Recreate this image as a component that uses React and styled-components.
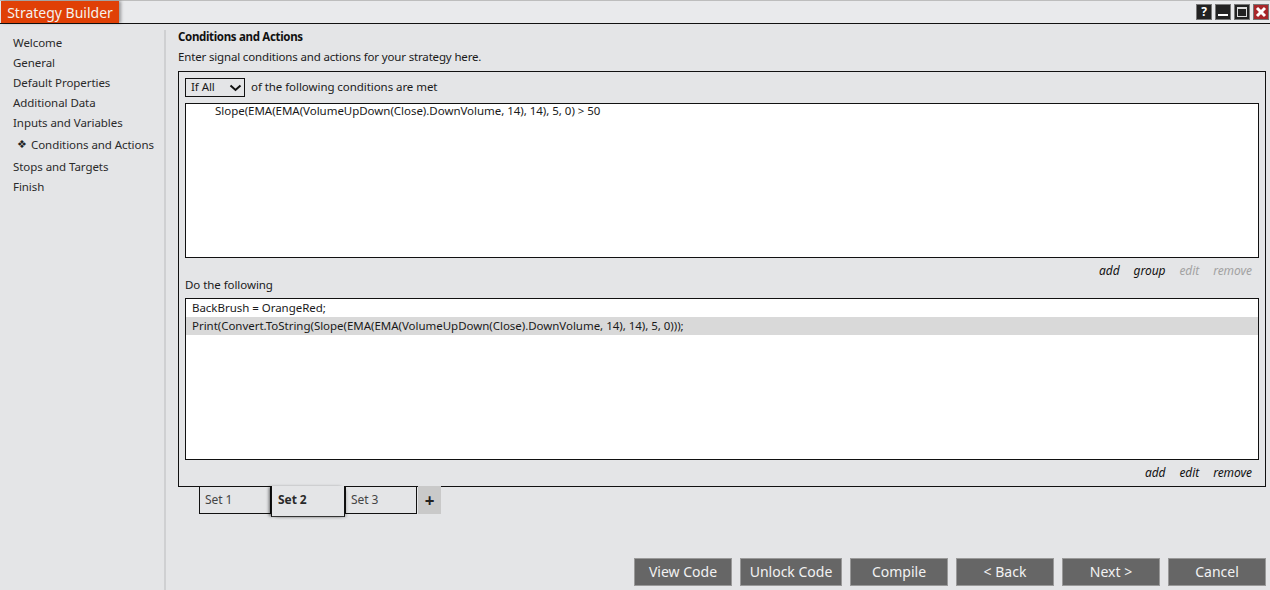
import { createGlobalStyle } from "styled-components";
import styled from "styled-components";

const navItems = [
  "Welcome",
  "General",
  "Default Properties",
  "Additional Data",
  "Inputs and Variables",
  "Conditions and Actions",
  "Stops and Targets",
  "Finish",
];

const footerButtons = ["View Code", "Unlock Code", "Compile", "< Back", "Next >", "Cancel"];

export default function App() {
  return (
    <Page>
      <GlobalStyle />
      <TitleBar>
        <TitleTab>Strategy Builder</TitleTab>
        <WindowButtons>
          <WindowButton>
            <HelpMark>?</HelpMark>
          </WindowButton>
          <WindowButton>
            <svg width="12" height="12" viewBox="0 0 12 12">
              <rect x="1" y="8" width="10" height="2" fill="#fff" />
            </svg>
          </WindowButton>
          <WindowButton>
            <svg width="12" height="12" viewBox="0 0 12 12">
              <rect x="1.5" y="1.5" width="9" height="9" fill="none" stroke="#ddd" />
              <rect x="1" y="1" width="10" height="2" fill="#ddd" />
            </svg>
          </WindowButton>
          <WindowButton $close>
            <svg width="12" height="12" viewBox="0 0 12 12">
              <path d="M2 2 L10 10 M10 2 L2 10" stroke="#fff" strokeWidth="3" />
            </svg>
          </WindowButton>
        </WindowButtons>
      </TitleBar>
      <Body>
        <Sidebar>
          {navItems.map((item) => (
            <NavItem key={item} $active={item === "Conditions and Actions"}>
              {item === "Conditions and Actions" && <NavMark>❖</NavMark>}
              {item}
            </NavItem>
          ))}
        </Sidebar>
        <Main>
          <Heading>Conditions and Actions</Heading>
          <Intro>Enter signal conditions and actions for your strategy here.</Intro>
          <Panel>
            <ConditionRow>
              <SelectBox>
                <span>If All</span>
                <svg width="13" height="8" viewBox="0 0 13 8">
                  <path d="M1.5 1.5 L6.5 6 L11.5 1.5" fill="none" stroke="#111" strokeWidth="2" />
                </svg>
              </SelectBox>
              <ConditionText>of the following conditions are met</ConditionText>
            </ConditionRow>
            <ListBox $height={155}>
              <ConditionLine>Slope(EMA(EMA(VolumeUpDown(Close).DownVolume, 14), 14), 5, 0) &gt; 50</ConditionLine>
            </ListBox>
            <ActionRow>
              <ActionLink>add</ActionLink>
              <ActionLink>group</ActionLink>
              <ActionLink $disabled>edit</ActionLink>
              <ActionLink $disabled>remove</ActionLink>
            </ActionRow>
            <SectionLabel>Do the following</SectionLabel>
            <ListBox $height={162}>
              <ActionLine>BackBrush = OrangeRed;</ActionLine>
              <ActionLine $selected>
                Print(Convert.ToString(Slope(EMA(EMA(VolumeUpDown(Close).DownVolume, 14), 14), 5, 0)));
              </ActionLine>
            </ListBox>
            <ActionRow>
              <ActionLink>add</ActionLink>
              <ActionLink>edit</ActionLink>
              <ActionLink>remove</ActionLink>
            </ActionRow>
          </Panel>
          <TabRow>
            <SetTab>Set 1</SetTab>
            <SetTab $active>Set 2</SetTab>
            <SetTab>Set 3</SetTab>
            <AddTab>+</AddTab>
          </TabRow>
          <Footer>
            {footerButtons.map((label) => (
              <FooterButton key={label} $wide={label === "Unlock Code"}>
                {label}
              </FooterButton>
            ))}
          </Footer>
        </Main>
      </Body>
    </Page>
  );
}

const GlobalStyle = createGlobalStyle`
  html, body {
    margin: 0;
    padding: 0;
    background: #e4e5e7;
  }
  * {
    box-sizing: border-box;
  }
`;

const Page = styled.div`
  width: 1270px;
  height: 590px;
  display: flex;
  flex-direction: column;
  overflow: hidden;
  background: #e4e5e7;
  color: #1a1a1a;
  font-family: "Noto Sans", "Open Sans", sans-serif;
  font-size: 11.5px;
  letter-spacing: -0.06px;
`;

const TitleBar = styled.div`
  height: 24px;
  flex: none;
  display: flex;
  justify-content: space-between;
  padding: 1px 1px 0 1px;
  background: #e9eaec;
  border-top: 1px solid #bdbdbd;
  border-bottom: 1px solid #111;
`;

const TitleTab = styled.div`
  width: 118px;
  height: 22px;
  margin-top: -1px;
  display: flex;
  align-items: center;
  justify-content: center;
  background: #e04006;
  box-shadow: 2px 0 3px rgba(0, 0, 0, 0.35);
  color: #f4f0ec;
  font-size: 14px;
  letter-spacing: 0;
`;

const WindowButtons = styled.div`
  display: flex;
  gap: 3px;
  padding-top: 2px;
`;

const WindowButton = styled.div`
  width: 16px;
  height: 16px;
  display: flex;
  align-items: center;
  justify-content: center;
  background: ${(p) => (p.$close ? "#a8262a" : "#222")};
  border: 1px solid #777;
`;

const HelpMark = styled.span`
  color: #fff;
  font-size: 12px;
  font-weight: 700;
  line-height: 1;
`;

const Body = styled.div`
  flex: 1;
  display: flex;
  min-height: 0;
`;

const Sidebar = styled.nav`
  width: 166px;
  flex: none;
  margin-top: 6px;
  padding: 2px 0 0 13px;
  border-right: 2px solid #cfd0d2;
`;

const NavItem = styled.div`
  height: ${(p) => (p.$active ? "24px" : "20px")};
  display: flex;
  align-items: center;
  padding-left: ${(p) => (p.$active ? "4px" : "0")};
  white-space: nowrap;
  color: #2a2a2a;
`;

const NavMark = styled.span`
  width: 14px;
  font-family: "DejaVu Sans", sans-serif;
  font-size: 11px;
  color: #222;
`;

const Main = styled.main`
  flex: 1;
  min-width: 0;
  display: flex;
  flex-direction: column;
  padding: 2px 4px 4px 12px;
`;

const Heading = styled.div`
  height: 21px;
  display: flex;
  align-items: center;
  font-weight: 700;
  letter-spacing: -0.33px;
  color: #111;
`;

const Intro = styled.div`
  height: 20px;
  display: flex;
  align-items: center;
  padding-bottom: 2px;
  letter-spacing: -0.16px;
`;

const Panel = styled.section`
  height: 416px;
  margin-top: 4px;
  padding: 6px 6px 0 6px;
  border: 1px solid #111;
  display: flex;
  flex-direction: column;
`;

const ConditionRow = styled.div`
  height: 19px;
  margin-bottom: 6px;
  display: flex;
  align-items: center;
  gap: 6px;
`;

const ConditionText = styled.span`
  padding-bottom: 2px;
`;

const SelectBox = styled.div`
  width: 60px;
  height: 19px;
  display: flex;
  align-items: center;
  justify-content: space-between;
  padding: 0 2px 0 5px;
  border: 1px solid #111;

  span {
    padding-bottom: 2px;
  }
`;

const ListBox = styled.div`
  height: ${(p) => p.$height}px;
  flex: none;
  background: #fff;
  border: 1px solid #111;
`;

const ConditionLine = styled.div`
  height: 14px;
  display: flex;
  align-items: center;
  padding: 0 0 2px 29px;
  letter-spacing: -0.03px;
`;

const ActionLine = styled.div`
  height: 18px;
  display: flex;
  align-items: center;
  padding: 0 0 1px 6px;
  letter-spacing: -0.03px;
  background: ${(p) => (p.$selected ? "#d9d9d9" : "transparent")};
`;

const ActionRow = styled.div`
  height: 20px;
  margin-top: 3px;
  flex: none;
  display: flex;
  align-items: center;
  justify-content: flex-end;
  gap: 14px;
  padding: 0 7px 2px 0;
`;

const ActionLink = styled.span`
  font-style: italic;
  font-size: 12px;
  color: ${(p) => (p.$disabled ? "#a2a2a2" : "#111")};
`;

const SectionLabel = styled.div`
  height: 17px;
  padding-bottom: 11px;
  display: flex;
  align-items: center;
`;

const TabRow = styled.div`
  display: flex;
  align-items: flex-start;
  margin-top: -1px;
  padding-left: 21px;
`;

const SetTab = styled.div`
  height: ${(p) => (p.$active ? "31px" : "28px")};
  width: ${(p) => (p.$active ? "74px" : "72px")};
  display: flex;
  align-items: center;
  padding: 0 0 ${(p) => (p.$active ? "4px" : "2px")} ${(p) => (p.$active ? "6px" : "5px")};
  font-size: 12px;
  font-weight: ${(p) => (p.$active ? 700 : 400)};
  color: ${(p) => (p.$active ? "#2a2a2a" : "#444")};
  border: 1px solid #111;
  border-top: ${(p) => (p.$active ? "none" : "1px solid #111")};
  border-bottom-color: ${(p) => (p.$active ? "#333" : "#111")};
  background: #e4e5e7;
  box-shadow: ${(p) =>
    p.$active ? "-3px 0 3px -1px rgba(0, 0, 0, 0.55), 3px 2px 3px -2px rgba(0, 0, 0, 0.3)" : "none"};
  position: relative;
  z-index: ${(p) => (p.$active ? 1 : 0)};
`;

const AddTab = styled.div`
  width: 23px;
  height: 28px;
  margin-left: 1px;
  display: flex;
  align-items: center;
  justify-content: center;
  background: #c9c9c9;
  font-size: 17px;
  font-weight: 700;
  color: #222;
`;

const Footer = styled.div`
  margin-top: auto;
  display: flex;
  justify-content: flex-end;
  gap: 8px;
`;

const FooterButton = styled.div`
  width: ${(p) => (p.$wide ? "102px" : "98px")};
  height: 28px;
  display: flex;
  align-items: center;
  justify-content: center;
  padding-bottom: 2px;
  background: #666;
  border: 1px solid #999;
  color: #f2f2f2;
  font-size: 14px;
  letter-spacing: 0;
`;
